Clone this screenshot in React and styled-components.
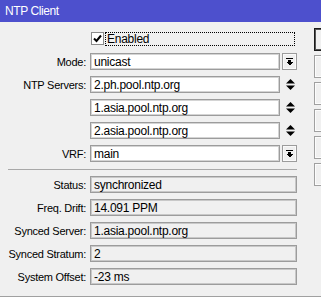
import React from "react";
import styled, { createGlobalStyle } from "styled-components";

const GlobalStyle = createGlobalStyle`
    html, body {
        margin: 0;
        padding: 0;
        background: #f0f0f0;
    }
    body {
        font-family: "Liberation Sans", Arial, sans-serif;
        font-size: 11px;
        letter-spacing: -0.25px;
        color: #000;
    }
`;

function DropIcon() {
    return (
        <svg width="7" height="8" viewBox="0 0 7 8" shapeRendering="crispEdges">
            <rect x="0" y="0" width="7" height="1" fill="#000" />
            <rect x="2" y="2" width="3" height="2" fill="#000" />
            <polygon points="0,4 7,4 3.5,7.5" fill="#000" />
        </svg>
    );
}

function UpDownIcon() {
    return (
        <svg width="9" height="11" viewBox="0 0 9 11">
            <polygon points="4.5,0 9,4.5 0,4.5" fill="#000" />
            <polygon points="0,6.5 9,6.5 4.5,11" fill="#000" />
        </svg>
    );
}

function App() {
    const servers = ["2.ph.pool.ntp.org", "1.asia.pool.ntp.org", "2.asia.pool.ntp.org"];
    const status = [
        ["Status:", "synchronized"],
        ["Freq. Drift:", "14.091 PPM"],
        ["Synced Server:", "1.asia.pool.ntp.org"],
        ["Synced Stratum:", "2"],
        ["System Offset:", "-23 ms"],
    ];

    return (
        <>
            <GlobalStyle />
            <Window>
                <TitleBar>NTP Client</TitleBar>
                <Body>
                    <Form>
                        <CheckRow>
                            <CheckBox>
                                <svg width="9" height="9" viewBox="0 0 9 9">
                                    <path d="M1 4.5 L3.5 7 L8 1.5" stroke="#000" strokeWidth="2" fill="none" />
                                </svg>
                            </CheckBox>
                            <FocusBox>Enabled</FocusBox>
                        </CheckRow>

                        <Label>Mode:</Label>
                        <Input>unicast</Input>
                        <SideButton>
                            <DropIcon />
                        </SideButton>

                        {servers.map((s, i) => (
                            <React.Fragment key={s}>
                                <Label>{i === 0 ? "NTP Servers:" : ""}</Label>
                                <Input>{s}</Input>
                                <SideIcon>
                                    <UpDownIcon />
                                </SideIcon>
                            </React.Fragment>
                        ))}

                        <Label>VRF:</Label>
                        <Input>main</Input>
                        <SideButton>
                            <DropIcon />
                        </SideButton>

                        <Separator />

                        {status.map(([label, value]) => (
                            <React.Fragment key={label}>
                                <Label>{label}</Label>
                                <ReadOnly>{value}</ReadOnly>
                            </React.Fragment>
                        ))}
                    </Form>
                    <ButtonColumn>
                        <Button $primary />
                        <Button />
                        <Button />
                        <Button />
                        <Button />
                        <Button />
                    </ButtonColumn>
                </Body>
                <Footer />
            </Window>
        </>
    );
}

export default App;

const Window = styled.div`
    width: 321px;
    height: 297px;
    background: #f0f0f0;
    display: flex;
    flex-direction: column;
    overflow: hidden;
`;
const TitleBar = styled.div`
    height: 22px;
    flex-shrink: 0;
    background: #4d50cd;
    color: #fff;
    font-size: 12px;
    letter-spacing: -0.4px;
    display: flex;
    align-items: center;
    padding-left: 5px;
`;
const Body = styled.div`
    flex: 1;
    display: flex;
    overflow: hidden;
`;
const Form = styled.div`
    width: 297px;
    flex-shrink: 0;
    display: grid;
    grid-template-columns: 90px 192px 15px;
    grid-auto-rows: min-content;
    row-gap: 6px;
    padding-top: 8px;
    align-content: start;
`;
const CheckRow = styled.div`
    grid-column: 2 / 4;
    height: 17px;
    display: flex;
    align-items: center;
`;
const CheckBox = styled.div`
    width: 11px;
    height: 11px;
    margin-left: 1px;
    border: 1px solid #8a8a8a;
    background: #fff;
    display: flex;
    align-items: center;
    justify-content: center;
`;
const FocusBox = styled.div`
    flex: 1;
    height: 12px;
    margin-left: 1px;
    margin-right: 2px;
    padding-left: 1px;
    border: 1px dotted #000;
    line-height: 12px;
    font-size: 12px;
`;
const Label = styled.div`
    grid-column: 1;
    height: 17px;
    padding-right: 4px;
    display: flex;
    align-items: center;
    justify-content: flex-end;
    white-space: nowrap;
`;
const Input = styled.div`
    grid-column: 2;
    width: 190px;
    height: 17px;
    box-sizing: border-box;
    border: 1px solid #9c9c9c;
    box-shadow: inset 0 0 0 1px #d4d4d4;
    background: #fff;
    padding-left: 3px;
    display: flex;
    align-items: center;
    font-size: 12px;
    white-space: nowrap;
    overflow: hidden;
`;
const SideButton = styled.div`
    grid-column: 3;
    height: 17px;
    box-sizing: border-box;
    border: 1px solid #9c9c9c;
    box-shadow: inset 0 0 0 1px #fafafa;
    background: #f0f0f0;
    display: flex;
    align-items: center;
    justify-content: center;
`;
const SideIcon = styled.div`
    grid-column: 3;
    height: 17px;
    display: flex;
    align-items: center;
    justify-content: flex-end;
    padding-right: 2px;
`;
const Separator = styled.div`
    grid-column: 1 / 4;
    height: 1px;
    margin-top: 1px;
    margin-left: 8px;
    background: #a8a8a8;
`;
const ReadOnly = styled.div`
    grid-column: 2 / 4;
    height: 17px;
    box-sizing: border-box;
    border: 1px solid #9c9c9c;
    box-shadow: inset 0 0 0 1px #c8c8c8;
    background: #f0f0f0;
    padding-left: 3px;
    display: flex;
    align-items: center;
    font-size: 12px;
    white-space: nowrap;
    overflow: hidden;
`;
const ButtonColumn = styled.div`
    margin-left: 17px;
    padding-top: 6px;
    display: flex;
    flex-direction: column;
    gap: 4px;
`;
const Button = styled.div`
    width: 80px;
    height: 23px;
    flex-shrink: 0;
    box-sizing: border-box;
    background: #f0f0f0;
    border: 1px solid ${(p) => (p.$primary ? "#1a1a1a" : "#a0a0a0")};
    box-shadow: ${(p) => (p.$primary ? "inset 0 0 0 1px #555" : "inset 0 0 0 1px #fcfcfc")};
`;
const Footer = styled.div`
    height: 1px;
    flex-shrink: 0;
    background: #a0a0a0;
`;
